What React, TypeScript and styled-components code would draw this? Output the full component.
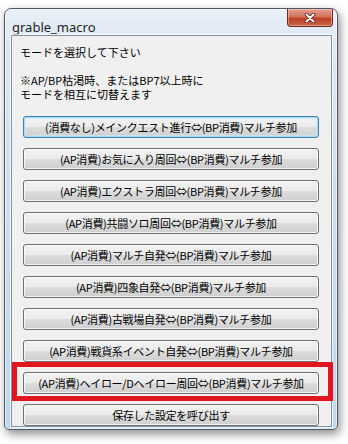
import styled, { createGlobalStyle } from "styled-components";

const GlobalStyle = createGlobalStyle`
  html, body {
    margin: 0;
    padding: 0;
    background: #ffffff;
  }
  body {
    font-family: "Noto Sans CJK JP", "Noto Sans", sans-serif;
  }
`;

const MODES = [
  { label: "(消費なし)メインクエスト進行⇔(BP消費)マルチ参加", isDefault: true },
  { label: "(AP消費)お気に入り周回⇔(BP消費)マルチ参加" },
  { label: "(AP消費)エクストラ周回⇔(BP消費)マルチ参加" },
  { label: "(AP消費)共闘ソロ周回⇔(BP消費)マルチ参加" },
  { label: "(AP消費)マルチ自発⇔(BP消費)マルチ参加" },
  { label: "(AP消費)四象自発⇔(BP消費)マルチ参加" },
  { label: "(AP消費)古戦場自発⇔(BP消費)マルチ参加" },
  { label: "(AP消費)戦貨系イベント自発⇔(BP消費)マルチ参加" },
  { label: "(AP消費)ヘイロー/Dヘイロー周回⇔(BP消費)マルチ参加", marked: true },
  { label: "保存した設定を呼び出す" },
];

const App = () => {
  return (
    <>
      <GlobalStyle />
      <Page>
        <Window>
          <TitleBar>
            <Title>grable_macro</Title>
            <CloseButton type="button" aria-label="閉じる">
              <svg width="12" height="10" viewBox="0 0 12 10">
                <path d="M2.5 1.5 L9.5 8.5 M9.5 1.5 L2.5 8.5" stroke="#5a1a12" strokeWidth="3.6" strokeLinecap="round" />
                <path d="M2.5 1.5 L9.5 8.5 M9.5 1.5 L2.5 8.5" stroke="#ffffff" strokeWidth="2" strokeLinecap="round" />
              </svg>
            </CloseButton>
          </TitleBar>
          <Client>
            <Message>
              モードを選択して下さい
              <br />
              <br />
              ※AP/BP枯渇時、またはBP7以上時に
              <br />
              モードを相互に切替えます
            </Message>
            <ButtonList>
              {MODES.map((mode) => (
                <ModeItem key={mode.label}>
                  <ModeButton type="button" $isDefault={!!mode.isDefault}>
                    {mode.label}
                  </ModeButton>
                  {mode.marked && <Marker />}
                </ModeItem>
              ))}
            </ButtonList>
          </Client>
        </Window>
      </Page>
    </>
  );
};

const Page = styled.div`
  width: 348px;
  height: 444px;
  box-sizing: border-box;
  padding: 8px 10px 14px 4px;
`;

const Window = styled.div`
  width: 334px;
  height: 422px;
  box-sizing: border-box;
  display: flex;
  flex-direction: column;
  padding: 0 5px 4px 6px;
  border: 1px solid #4d5864;
  border-radius: 7px 7px 5px 5px;
  background: linear-gradient(180deg, #eaf1f8 0%, #dde8f4 8%, #cfdff1 40%, #c0d7ef 100%);
  box-shadow: inset 0 0 0 1px rgba(255, 255, 255, 0.55), 2px 4px 10px rgba(0, 0, 0, 0.45);
`;

const TitleBar = styled.div`
  height: 28px;
  display: flex;
  justify-content: space-between;
  align-items: flex-start;
`;

const Title = styled.span`
  padding: 10px 0 0 1px;
  font-family: "Noto Sans", "DejaVu Sans", sans-serif;
  font-size: 13px;
  line-height: 16px;
  color: #1e1e1e;
`;

const CloseButton = styled.button`
  width: 46px;
  height: 18px;
  margin: 0 -1px 0 0;
  padding: 0;
  display: flex;
  align-items: center;
  justify-content: center;
  border: 1px solid #6b2a22;
  border-top: none;
  border-radius: 0 0 4px 4px;
  background: linear-gradient(180deg, #e6a090 0%, #d2725c 45%, #bd4129 55%, #cc6246 100%);
  box-shadow: inset 0 0 0 1px rgba(255, 220, 210, 0.45);
`;

const Client = styled.div`
  flex: 1;
  box-sizing: border-box;
  border: 1px solid #8393a4;
  background: #f0f0f0;
  box-shadow: 0 0 0 1px rgba(255, 255, 255, 0.7);
  padding-top: 9px;
`;

const Message = styled.p`
  margin: 0;
  padding-left: 8px;
  font-size: 11px;
  line-height: 14px;
  color: #000000;
`;

const ButtonList = styled.div`
  margin-top: 12px;
  padding: 0 12px 0 11px;
  display: flex;
  flex-direction: column;
  gap: 7px;
`;

const ModeItem = styled.div`
  position: relative;
`;

const ModeButton = styled.button<{ $isDefault: boolean }>`
  width: 296px;
  height: 22px;
  padding: 0;
  font-family: "Noto Sans CJK JP", sans-serif;
  font-size: 11px;
  letter-spacing: -0.3px;
  line-height: 20px;
  color: #000000;
  white-space: nowrap;
  border: 1px solid ${({ $isDefault }) => ($isDefault ? "#3c7fb1" : "#707070")};
  border-radius: 3px;
  background: linear-gradient(180deg, #f2f2f2 0%, #ebebeb 50%, #dddddd 50%, #cfcfcf 100%);
  box-shadow: ${({ $isDefault }) =>
    $isDefault
      ? "inset 0 0 0 1px #a8dcf6, inset 0 0 0 2px rgba(200, 235, 252, 0.6)"
      : "inset 0 0 0 1px rgba(255, 255, 255, 0.75)"};
`;

const Marker = styled.div`
  position: absolute;
  top: -7px;
  bottom: -7px;
  left: -11px;
  right: -14px;
  border: 5px solid #e3161f;
  pointer-events: none;
`;

export default App;
